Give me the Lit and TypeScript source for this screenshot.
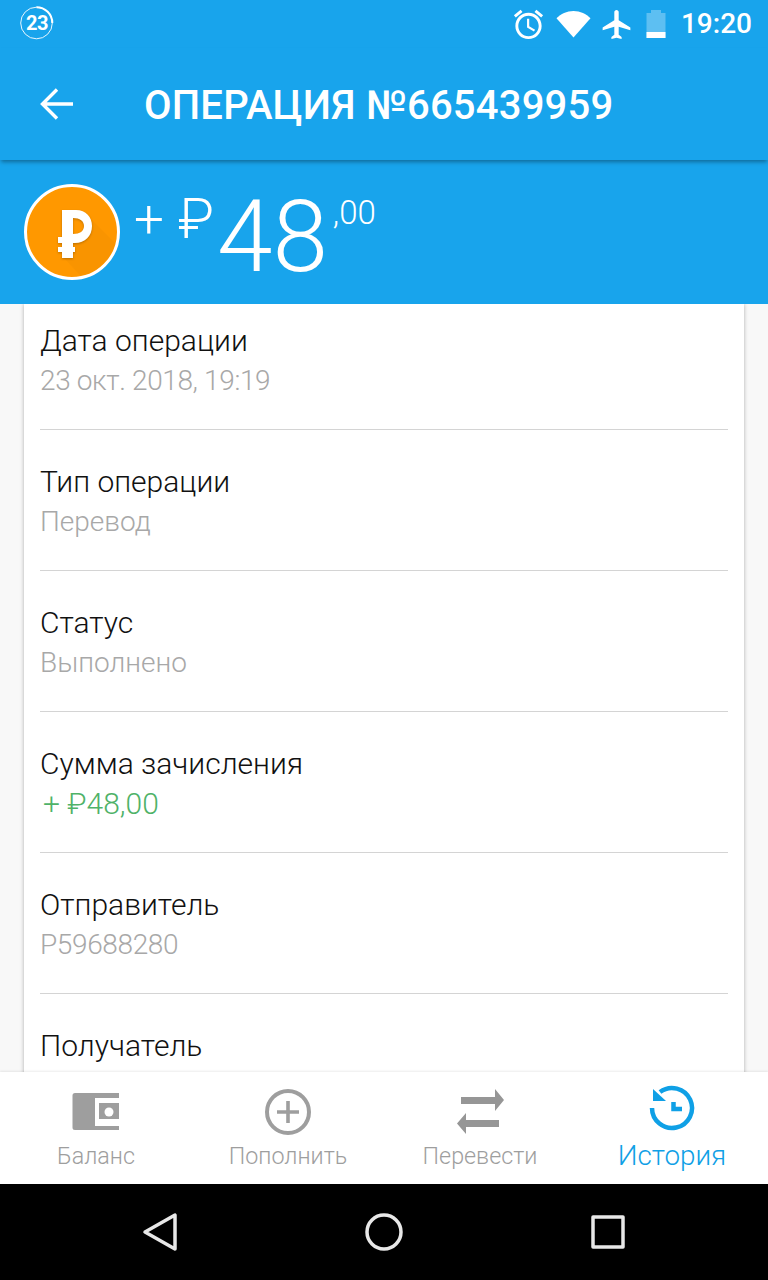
import { LitElement, html, css } from "lit";
import { customElement } from "lit/decorators.js";

const rows: [string, string, string?][] = [
  ["Дата операции", "23 окт. 2018, 19:19", "num"],
  ["Тип операции", "Перевод"],
  ["Статус", "Выполнено"],
  ["Сумма зачисления", "+ ₽48,00", "green"],
  ["Отправитель", "P59688280", "num"],
  ["Получатель", ""],
];

@customElement("app-root")
export class AppRoot extends LitElement {
  static styles = css`
    :host { display: flex; flex-direction: column; width: 768px; height: 1280px; overflow: hidden; font-family: Roboto, "Liberation Sans", sans-serif; background: #f8f8f8; }
    svg { display: block; flex: none; }
    .status { height: 48px; flex: none; background: #18a4ec; display: flex; align-items: center; color: #fff; padding: 0 16px 0 20px; }
    .spacer { flex: 1; }
    .clock { font-size: 28px; font-weight: 500; margin-left: 15px; line-height: 48px; }
    .badge { position: relative; width: 34px; height: 34px; margin-bottom: 2px; }
    .badge span { position: absolute; inset: 0; display: flex; align-items: center; justify-content: center; font-size: 20px; font-weight: 700; letter-spacing: -0.5px; }
    .status-icons { display: flex; align-items: center; }
    .wifi { margin-left: 10px; }
    .plane { margin-left: 8px; }
    .batt { margin-left: 12px; }
    .appbar { height: 112px; flex: none; background: #18a4ec; display: flex; align-items: center; padding-left: 37px; box-shadow: 0 3px 4px -1px rgba(0,0,0,.35); position: relative; z-index: 2; }
    .title { margin-left: 67px; font-size: 40px; font-weight: 500; color: #fff; letter-spacing: 0.2px; position: relative; top: 1px; }
    .amount { height: 144px; flex: none; background: #18a4ec; display: flex; padding-left: 24px; color: #fff; position: relative; z-index: 1; }
    .coin { width: 96px; height: 96px; margin-top: 24px; }
    .glyph { filter: drop-shadow(0 1px 1px rgba(0,0,0,.25)); }
    .sum { display: flex; align-items: flex-start; font-weight: 300; margin-left: 14px; }
    .plus { font-size: 53px; line-height: 56px; margin-top: 32px; }
    .rub { font-size: 56px; line-height: 56px; margin-top: 31px; margin-left: 14px; }
    .int { font-size: 100px; line-height: 112px; margin-left: 3px; margin-top: 21px; }
    .cents { font-size: 33px; line-height: 40px; margin-top: 33px; margin-left: 5px; }
    .main { flex: 1; min-height: 0; overflow: hidden; padding: 0 24px; }
    .card { background: #fff; padding: 0 16px; box-shadow: 0 0 4px rgba(0,0,0,.3); }
    .row { padding: 33px 0 28px; border-bottom: 1px solid #d4d4d4; }
    .row:first-child { padding-top: 18px; }
    .row:last-child { border-bottom: 0; }
    .row .k { line-height: 38px; color: #111; font-size: 30px; font-weight: 300; }
    .row .v { line-height: 41px; color: #a8a8a8; font-size: 28px; font-weight: 300; min-height: 41px; }
    .row .v.num { letter-spacing: -0.37px; }
    .row .v.green { color: #4fb268; font-size: 30px; padding-left: 3px; }
    .tabs { height: 112px; flex: none; background: #fff; display: grid; grid-template-columns: repeat(4, 1fr); position: relative; z-index: 2; box-shadow: 0 -1px 2px rgba(0,0,0,.08); }
    .tab { display: flex; flex-direction: column; align-items: center; color: #9e9e9e; font-weight: 300; font-size: 23.300px; }
    .tab .ic { height: 48px; margin-top: 16px; }
    .tab .lb { line-height: 40px; }
    .tab.on { color: #0fa0e6; font-size: 27.800px; }
    .tab.on .ic { margin-top: 12px; margin-bottom: 4px; }
    .nav { height: 96px; flex: none; background: #000; display: grid; grid-template-columns: 320px 128px 320px; align-items: center; }
    .nav > div { display: flex; justify-content: center; }
    .nav .l { justify-content: flex-end; padding-right: 142px; }
    .nav .r { justify-content: flex-start; padding-left: 143px; }
  `;

  render() {
    return html`
      <div class="status">
        <div class="badge">
          <svg width="34" height="34" viewBox="0 0 34 34" fill="none" stroke="#fff">
            <circle cx="16.500" cy="17" r="15.800" stroke-width=".9" />
            <path d="M16.500 1.200A15.800 15.800 0 0 1 32.300 17" stroke-width="2" />
          </svg>
          <span>23</span>
        </div>
        <div class="spacer"></div>
        <div class="status-icons">
          <svg width="35" height="35" viewBox="0 0 24 24" fill="#fff"><path d="M22 5.720l-4.600-3.860-1.290 1.530 4.600 3.860L22 5.720zM7.880 3.390L6.600 1.860 2 5.710l1.290 1.530 4.590-3.850zM12.500 8H11v6l4.750 2.850.75-1.230-4-2.370V8zM12 4c-4.970 0-9 4.030-9 9s4.030 9 9 9 9-4.030 9-9-4.030-9-9-9zm0 16c-3.870 0-7-3.130-7-7s3.130-7 7-7 7 3.130 7 7-3.130 7-7 7z"/></svg>
          <svg class="wifi" width="35" height="28" viewBox="0 0 36 28" fill="#fff"><path d="M18 28L.5 8C5 3.500 11 .5 18 .5S31 3.500 35.500 8z"/></svg>
          <svg class="plane" width="35" height="35" viewBox="0 0 24 24" fill="#fff"><path d="M21 16v-2l-8-5V3.500C13 2.670 12.330 2 11.500 2S10 2.670 10 3.500V9l-8 5v2l8-2.500V19l-2 1.500V22l3.500-1 3.500 1v-1.500L13 19v-5.500l8 2.500z" transform="translate(.5)"/></svg>
          <svg class="batt" width="20" height="30" viewBox="0 0 20 30"><path d="M5 1h10v3h4.500v25H.5V4H5z" fill="#fff" fill-opacity=".3"/><path d="M.5 23h19v6H.5z" fill="#fff"/></svg>
        </div>
        <div class="clock">19:20</div>
      </div>
      <div class="appbar">
        <svg width="40" height="40" viewBox="0 0 40 40" fill="none" stroke="#fff" stroke-width="3.400"><path d="M36 20H6M20 5.500L5.500 20 20 34.500"/></svg>
        <div class="title">ОПЕРАЦИЯ №665439959</div>
      </div>
      <div class="amount">
        <svg class="coin" width="96" height="96" viewBox="0 0 96 96">
          <defs><clipPath id="cc"><circle cx="48" cy="48" r="45"/></clipPath></defs>
          <circle cx="48" cy="48" r="46.500" fill="#ff9800" stroke="#fff" stroke-width="3"/>
          <path d="M68 36L100 68V100H64L38 72z" fill="#000" fill-opacity=".025" clip-path="url(#cc)"/>
          <path class="glyph" d="M38 26H52C62 26 68 33 68 42C68 52 61 59 51 59V59H49V63H51V68H49V74H38V68H34V63H38V59H34V53H38zM49 34V50C56 50 60 47 60 42C60 37 56 34 49 34z" fill="#fff" fill-rule="evenodd"/>
        </svg>
        <div class="sum">
          <span class="plus">+</span>
          <span class="rub">₽</span>
          <span class="int">48</span>
          <span class="cents">,00</span>
        </div>
      </div>
      <div class="main">
        <div class="card">
          ${rows.map(([k, v, c]) => html`<div class="row"><div class="k">${k}</div><div class="v ${c ?? ""}">${v}</div></div>`)}
        </div>
      </div>
      <div class="tabs">
        <div class="tab">
          <div class="ic"><svg width="48" height="48" viewBox="0 0 48 48"><path fill-rule="evenodd" d="M3 5H47V10H23V38H47V42H3a2.500 2.500 0 0 1-2.500-2.500V7.500A2.500 2.500 0 0 1 3 5z" fill="#9e9e9e"/><path d="M27 15H47V31H27z" fill="#9e9e9e"/><circle cx="37" cy="24" r="4.500" fill="#fff"/></svg></div>
          <div class="lb">Баланс</div>
        </div>
        <div class="tab">
          <div class="ic"><svg width="48" height="48" viewBox="0 0 48 48" fill="none" stroke="#9e9e9e"><circle cx="24" cy="24" r="21" stroke-width="4"/><path d="M24 13V35M13 24H35" stroke-width="3.600"/></svg></div>
          <div class="lb">Пополнить</div>
        </div>
        <div class="tab">
          <div class="ic"><svg width="48" height="48" viewBox="0 0 48 48" fill="#969696"><path d="M5 9H39V1L48 12 39 23V16H5z"/><path d="M43 32H10V25L1 35.500 10 46V39H43z"/></svg></div>
          <div class="lb">Перевести</div>
        </div>
        <div class="tab on">
          <div class="ic"><svg width="48" height="48" viewBox="0 0 48 48" fill="none" stroke="#0fa0e6"><path d="M12 8A20 20 0 1 1 4 24" stroke-width="4.500"/><path d="M5 5V17H18z" fill="#0fa0e6" stroke="none"/><path d="M25.500 18V25H34" stroke-width="4.500"/></svg></div>
          <div class="lb">История</div>
        </div>
      </div>
      <div class="nav">
        <div class="l"><svg width="36" height="40" viewBox="0 0 36 40" fill="none" stroke="#e8e8e8" stroke-width="3.500" stroke-linejoin="round"><path d="M33 3V37L3 20z"/></svg></div>
        <div><svg width="40" height="40" viewBox="0 0 40 40" fill="none" stroke="#e8e8e8" stroke-width="3.500"><circle cx="20" cy="20" r="17"/></svg></div>
        <div class="r"><svg width="34" height="34" viewBox="0 0 34 34" fill="none" stroke="#e8e8e8" stroke-width="3.500" stroke-linejoin="round"><rect x="2" y="2" width="30" height="30"/></svg></div>
      </div>
    `;
  }
}
